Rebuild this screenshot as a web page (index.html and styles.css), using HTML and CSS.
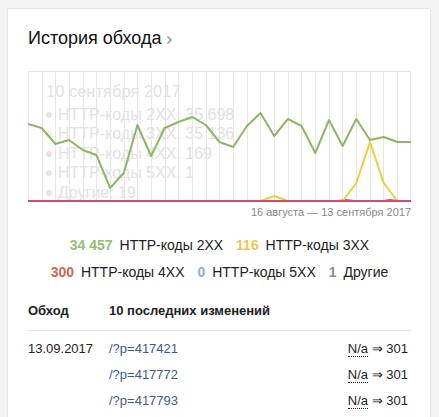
FILE: index.html
```html
<!DOCTYPE html>
<html>
<head>
    <meta charset="UTF-8">
    <title>История обхода</title>
    <link rel="stylesheet" href="styles.css">
</head>
<body>
    <div class="card">
        <!-- Header -->
        <h2 class="title">История обхода
            <svg class="chevron" width="7" height="10" viewBox="0 0 7 10"><path d="M1.5 1.5 L5 5 L1.5 8.5" fill="none" stroke="#8a8a8a" stroke-width="1.4"/></svg>
        </h2>

        <!-- Chart -->
        <svg class="chart" width="383" height="132" viewBox="0 0 383 132">
            <g class="ghost">
                <text x="18" y="27" class="ghost-date">10 сентября 2017</text>
                <circle cx="21" cy="45" r="3" fill="#e2ebda"/>
                <text x="30" y="50">HTTP-коды 2XX: 35 698</text>
                <circle cx="21" cy="64" r="3" fill="#f8f0d3"/>
                <text x="30" y="69">HTTP-коды 3XX: 35 136</text>
                <circle cx="21" cy="84" r="3" fill="#f5dada"/>
                <text x="30" y="89">HTTP-коды 4XX: 169</text>
                <circle cx="21" cy="103" r="3" fill="#dfe8f2"/>
                <text x="30" y="108">HTTP-коды 5XX: 1</text>
                <circle cx="21" cy="123" r="3" fill="#eadfec"/>
                <text x="30" y="128">Другие: 19</text>
            </g>
            <path class="grid" d="M0.5 1 V131 M14.5 1 V131 M27.5 1 V131 M41.5 1 V131 M55.5 1 V131 M68.5 1 V131 M82.5 1 V131 M96.5 1 V131 M109.5 1 V131 M123.5 1 V131 M137.5 1 V131 M150.5 1 V131 M164.5 1 V131 M178.5 1 V131 M191.5 1 V131 M205.5 1 V131 M219.5 1 V131 M232.5 1 V131 M246.5 1 V131 M260.5 1 V131 M273.5 1 V131 M287.5 1 V131 M301.5 1 V131 M314.5 1 V131 M328.5 1 V131 M342.5 1 V131 M355.5 1 V131 M369.5 1 V131 M382.5 1 V131 M0 1.5 H383"/>
            <polyline class="line-other" points="310,131 318,130 326,131 355,131 362,130 370,131"/>
            <polyline class="line-2xx" points="0,54 13.7,58 27.4,74 41,70 54.7,80 68.4,85 82.1,118 95.8,103 109.4,55 123.1,86 136.8,58 150.5,52 164.2,47 177.8,55 191.5,72 205.2,77 218.9,56 232.6,43 246.2,66 259.9,49 273.6,56 287.3,83 301,50 314.6,76 328.3,49 342,70 355.7,67 369.4,72 383,72"/>
            <polyline class="line-3xx" points="218.9,131 232.6,131 246.2,126 259.9,131 314.6,131 328.3,113 342,72 355.7,113 369.4,131"/>
            <line class="line-4xx" x1="0" y1="131" x2="383" y2="131"/>
        </svg>
        <div class="period">16 августа — 13 сентября 2017</div>

        <!-- Legend -->
        <div class="legend">
            <div class="legend-row">
                <span class="item"><b class="c2xx">34 457</b> HTTP-коды 2XX</span>
                <span class="item"><b class="c3xx">116</b> HTTP-коды 3XX</span>
            </div>
            <div class="legend-row">
                <span class="item"><b class="c4xx">300</b> HTTP-коды 4XX</span>
                <span class="item"><b class="c5xx">0</b> HTTP-коды 5XX</span>
                <span class="item"><b class="cother">1</b> Другие</span>
            </div>
        </div>

        <!-- Last changes -->
        <div class="changes">
            <div class="changes-head">
                <span class="col-date">Обход</span>
                <span>10 последних изменений</span>
            </div>
            <div class="changes-row">
                <span class="col-date">13.09.2017</span>
                <a href="#" class="url">/?p=417421</a>
                <span class="status"><span class="na">N/a</span> ⇒ 301</span>
            </div>
            <div class="changes-row">
                <span class="col-date"></span>
                <a href="#" class="url">/?p=417772</a>
                <span class="status"><span class="na">N/a</span> ⇒ 301</span>
            </div>
            <div class="changes-row">
                <span class="col-date"></span>
                <a href="#" class="url">/?p=417793</a>
                <span class="status"><span class="na">N/a</span> ⇒ 301</span>
            </div>
        </div>
    </div>
</body>
</html>
```

FILE: styles.css
```css
body {
    font-family: "Liberation Sans", Arial, sans-serif;
    background-color: #f3f3f3;
    color: #222;
    margin: 0;
    padding: 8px 0 0 7px;
}
.card {
    background-color: #fff;
    border: 1px solid #e6e6e6;
    border-bottom: none;
    width: 383px;
    height: 391px;
    padding: 17px 19px 0 20px;
}
.title {
    font-size: 18px;
    font-weight: normal;
    line-height: 24px;
    margin: 0 0 20px 0;
    color: #111;
}
.chevron {
    vertical-align: -1px;
}
.chart {
    display: block;
}
.ghost {
    font-family: "Liberation Sans", Arial, sans-serif;
    font-size: 16px;
    fill: #e2e2e2;
}
.ghost-date {
    font-size: 16.5px;
}
.grid {
    stroke: #e6e6e6;
    stroke-width: 1;
    fill: none;
}
.line-2xx, .line-3xx, .line-4xx, .line-other {
    fill: none;
    stroke-width: 2;
    stroke-linejoin: round;
}
.line-2xx {
    stroke: #8cb865;
}
.line-3xx {
    stroke: #f1cd3c;
}
.line-4xx {
    stroke: #c65470;
}
.line-other {
    stroke: #a0609a;
}
.period {
    text-align: right;
    font-size: 11px;
    line-height: 16px;
    color: #888;
    margin-top: 2px;
}
.legend {
    margin-top: 12px;
    font-size: 14px;
    line-height: 27px;
}
.legend-row {
    display: flex;
    justify-content: center;
    gap: 13px;
}
.legend b {
    margin-right: 3px;
}
.c2xx {
    color: #95bd77;
}
.c3xx {
    color: #ecc852;
}
.c4xx {
    color: #d9654f;
}
.c5xx {
    color: #8db2d8;
}
.cother {
    color: #9a80ab;
}
.changes {
    margin-top: 15px;
    font-size: 13px;
}
.changes-head {
    display: flex;
    font-weight: bold;
    line-height: 20px;
    padding-bottom: 9px;
    border-bottom: 1px solid #e5e5e5;
    margin-bottom: 5px;
}
.changes-row {
    display: flex;
    line-height: 26px;
}
.col-date {
    width: 81px;
    flex-shrink: 0;
}
.url {
    color: #3d5a96;
    text-decoration: none;
    flex: 1;
}
.status {
    padding-right: 3px;
}
.na {
    border-bottom: 1px dotted #222;
}
```
